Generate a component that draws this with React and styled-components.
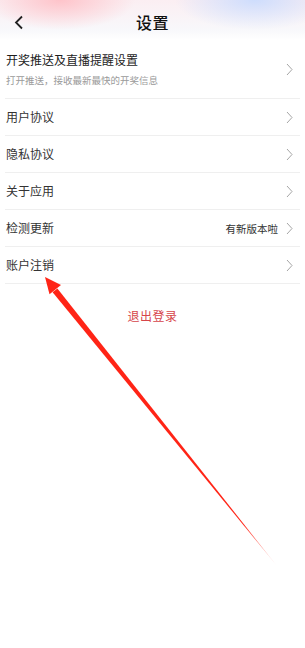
import React from 'react';
import styled, { createGlobalStyle } from 'styled-components';

const GlobalStyle = createGlobalStyle`
  html, body {
    margin: 0;
    padding: 0;
    background: #fff;
  }
  body {
    font-family: 'Noto Sans CJK SC', 'Noto Sans', sans-serif;
  }
`;

const Page = styled.div`
  position: relative;
  width: 305px;
  height: 648px;
  overflow: hidden;
  background: #fff;
`;

const Header = styled.header`
  height: 40px;
  padding-top: 3px;
  box-sizing: border-box;
  display: flex;
  align-items: center;
  justify-content: center;
  position: relative;
  background:
    radial-gradient(ellipse 75px 30px at 60px 0px, rgba(255, 185, 192, 0.8), rgba(255, 185, 192, 0) 100%),
    radial-gradient(ellipse 80px 30px at 255px 0px, rgba(198, 218, 255, 0.85), rgba(198, 218, 255, 0) 100%),
    linear-gradient(180deg, #fbeef2 0%, #f8f8fb 75%, #ffffff 100%);
`;

const BackButton = styled.button`
  position: absolute;
  left: 12px;
  top: 14px;
  width: 14px;
  height: 16px;
  padding: 0;
  border: none;
  background: none;
  display: flex;
  align-items: center;
  justify-content: center;
`;

const Title = styled.h1`
  margin: 0;
  font-size: 16px;
  font-weight: 500;
  color: #111;
  letter-spacing: 0.5px;
`;

const List = styled.ul`
  list-style: none;
  margin: 0;
  padding: 0 5px;
`;

const Row = styled.li`
  display: flex;
  align-items: center;
  height: ${(p) => (p.tall ? '59px' : '37px')};
  padding: 0 7px 0 1px;
  border-bottom: 1px solid #efefef;
  box-sizing: border-box;
`;

const Texts = styled.div`
  flex: 1;
  display: flex;
  flex-direction: column;
  gap: 6px;
  padding-top: ${(p) => (p.tall ? '1px' : '0')};
`;

const Label = styled.div`
  font-size: 12px;
  color: ${(p) => (p.strong ? '#1d1d1d' : '#333')};
  line-height: 16px;
`;

const Sub = styled.div`
  font-size: 9.5px;
  color: #9a9a9a;
  line-height: 13px;
`;

const Extra = styled.span`
  font-size: 10.5px;
  color: #333;
  margin-right: 8px;
`;

const Logout = styled.button`
  display: block;
  margin: 23px auto 0;
  padding: 0;
  border: none;
  background: none;
  font-family: inherit;
  font-size: 12px;
  color: #d6454a;
  letter-spacing: 0.5px;
`;

const Annotation = styled.svg`
  position: absolute;
  left: 0;
  top: 0;
  pointer-events: none;
`;

const Chevron = () => (
  <svg width="7" height="13" viewBox="0 0 7 13">
    <path d="M1 1 L6 6.5 L1 12" fill="none" stroke="#9b9b9b" strokeWidth="0.9" />
  </svg>
);

const items = [
  { label: '用户协议' },
  { label: '隐私协议' },
  { label: '关于应用' },
  { label: '检测更新', extra: '有新版本啦' },
  { label: '账户注销' },
];

const App = () => (
  <Page>
    <GlobalStyle />
    <Header>
      <BackButton>
        <svg width="10" height="15" viewBox="0 0 10 15">
          <path d="M8 1.5 L2 7.5 L8 13.5" fill="none" stroke="#222" strokeWidth="1.8" />
        </svg>
      </BackButton>
      <Title>设置</Title>
    </Header>
    <List>
      <Row tall>
        <Texts tall>
          <Label strong>开奖推送及直播提醒设置</Label>
          <Sub>打开推送，接收最新最快的开奖信息</Sub>
        </Texts>
        <Chevron />
      </Row>
      {items.map((item) => (
        <Row key={item.label}>
          <Texts>
            <Label>{item.label}</Label>
          </Texts>
          {item.extra && <Extra>{item.extra}</Extra>}
          <Chevron />
        </Row>
      ))}
    </List>
    <Logout>退出登录</Logout>
    <Annotation width="305" height="648" viewBox="0 0 305 648">
      <defs>
        <linearGradient id="fade" x1="55" y1="290" x2="277" y2="566" gradientUnits="userSpaceOnUse">
          <stop offset="0" stopColor="#ff2416" stopOpacity="1" />
          <stop offset="0.85" stopColor="#ff2416" stopOpacity="1" />
          <stop offset="1" stopColor="#ff2416" stopOpacity="0.1" />
        </linearGradient>
      </defs>
      <polygon points="52.6,292.2 57.4,288.4 277,566" fill="url(#fade)" />
      <polygon points="45,277 49.5,294.2 61,285" fill="#ff2416" />
    </Annotation>
  </Page>
);

export default App;
